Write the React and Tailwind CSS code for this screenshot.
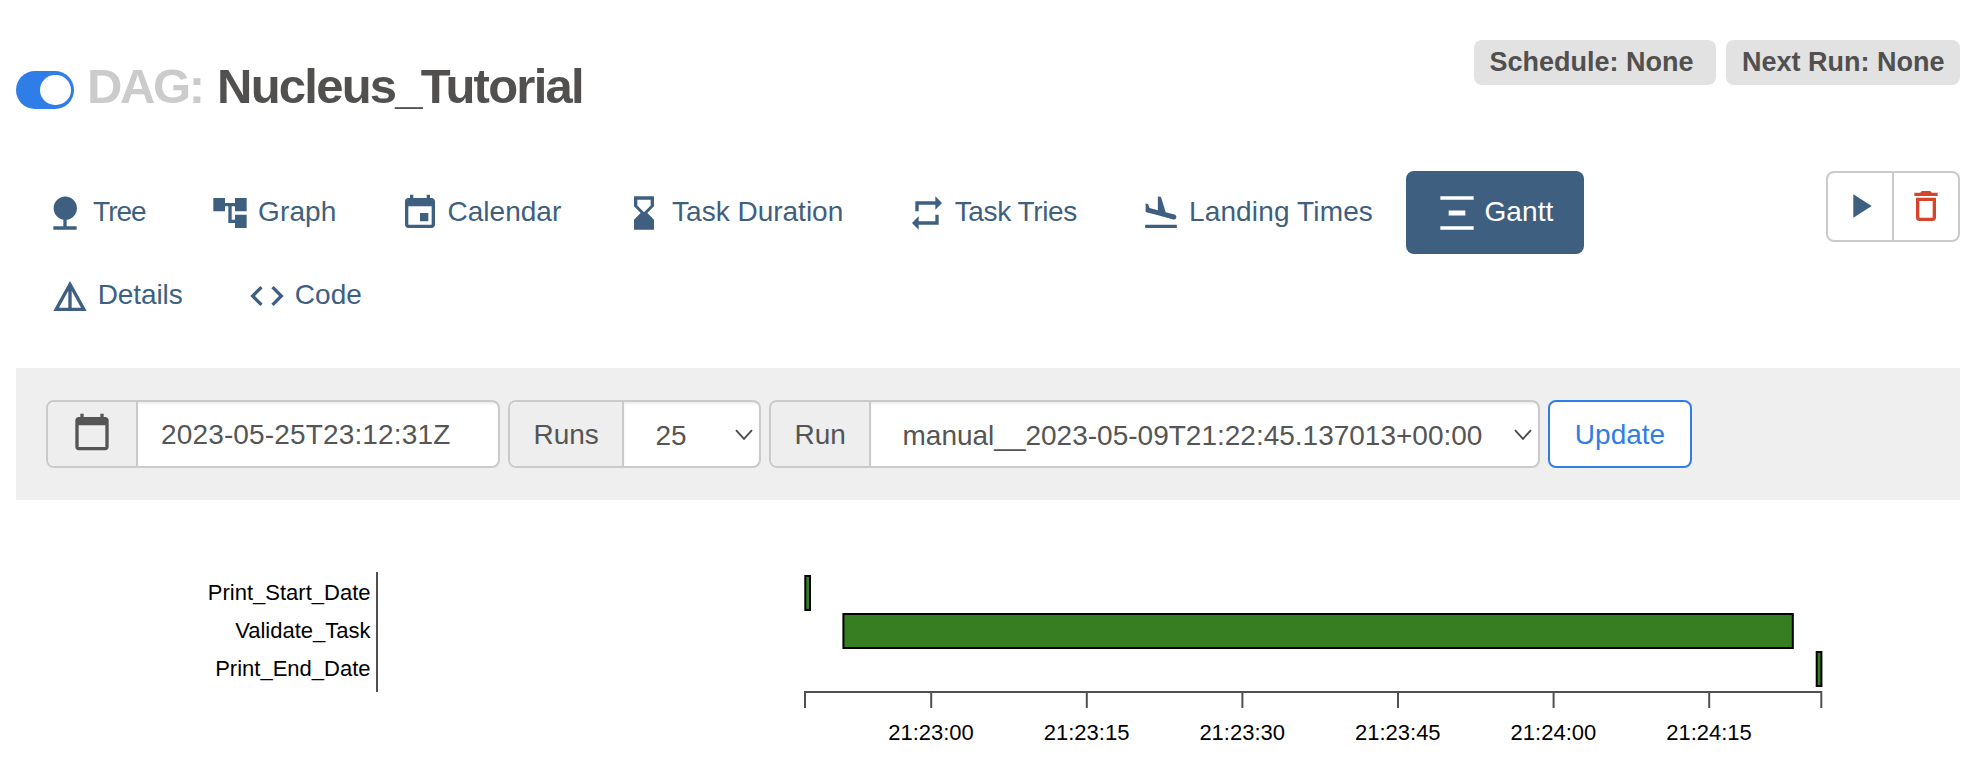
const ICONS = {
  tree: "M13 16.12c3.47-.41 6.17-3.36 6.17-6.95 0-3.87-3.13-7-7-7s-7 3.13-7 7c0 3.47 2.52 6.34 5.83 6.89V20H5v2h14v-2h-6v-3.88z",
  graph: "M22 11V3h-7v3H9V3H2v8h7V8h2v10h4v3h7v-8h-7v3h-2V8h2v3z",
  event: "M17 12h-5v5h5v-5zM16 1v2H8V1H6v2H5c-1.11 0-1.99.9-1.99 2L3 19c0 1.1.89 2 2 2h14c1.1 0 2-.9 2-2V5c0-1.1-.9-2-2-2h-1V1h-2zm3 18H5V8h14v11z",
  hourglass: "M18 22l-.01-6L14 12l3.99-4.01L18 2H6v6l4 4-4 3.99V22h12zM8 7.5V4h8v3.5l-4 4-4-4z",
  repeat: "M7 7h10v3l4-4-4-4v3H5v6h2V7zm10 10H7v-3l-4 4 4 4v-3h12v-6h-2v4z",
  landing: "M2.5 19h19v2h-19zM9.68 13.27l4.35 1.16 5.31 1.42c.8.21 1.62-.26 1.84-1.06.21-.8-.26-1.62-1.06-1.84l-5.31-1.42-2.76-9.02L10.12 2v8.28L5.15 8.95l-.93-2.32-1.45-.39v5.17l1.6.43 5.31 1.43z",
  gantt: "M22 2v2H2V2h20zM7 10.5v3h10v-3H7zM2 20v2h20v-2H2z",
  details: "M12 3L2 21h20L12 3zm1 5.92L18.6 19H13V8.92zm-2 0V19H5.4L11 8.92z",
  code: "M9.4 16.6L4.8 12l4.6-4.6L8 6l-6 6 6 6 1.4-1.4zm5.2 0l4.6-4.6-4.6-4.6L16 6l6 6-6 6-1.4-1.4z",
  calendar: "M20 3h-1V1h-2v2H7V1H5v2H4c-1.1 0-2 .9-2 2v16c0 1.1.9 2 2 2h16c1.1 0 2-.9 2-2V5c0-1.1-.9-2-2-2zm0 18H4V8h16v13z",
  play: "M8 5v14l11-7z",
  trash: "M6 19c0 1.1.9 2 2 2h8c1.1 0 2-.9 2-2V7H6v12zM8 9h8v10H8V9zm7.5-5l-1-1h-5l-1 1H5v2h14V4h-3.5z",
};

function Icon({ name, className = "" }) {
  return (
    <svg viewBox="0 0 24 24" fill="currentColor" className={`size-10 shrink-0 ${className}`}>
      <path d={ICONS[name]} />
    </svg>
  );
}

const TABS = [
  { icon: "tree", label: "Tree", width: "w-[161px]", text: "tracking-[-1px]" },
  { icon: "graph", label: "Graph", width: "w-[185.5px]", text: "tracking-[0.1px]" },
  { icon: "event", label: "Calendar", width: "w-[220.5px]", text: "tracking-[0px]" },
  { icon: "hourglass", label: "Task Duration", width: "w-[278.7px]", text: "tracking-[0px]" },
  { icon: "repeat", label: "Task Tries", width: "w-[230.2px]", text: "tracking-[-0.4px]" },
  { icon: "landing", label: "Landing Times", width: "w-[291.5px]", text: "tracking-[0.15px]" },
  { icon: "gantt", label: "Gantt", width: "w-[178px]", text: "tracking-[0.1px]", active: true },
];

const TABS_MORE = [
  { icon: "details", label: "Details", width: "w-[193px]", text: "tracking-[-0.1px]" },
  { icon: "code", label: "Code", width: "w-[180px]", text: "tracking-[0.1px]" },
];

function Tab({ icon, label, width, text, active }) {
  return (
    <a
      className={`flex h-[83px] shrink-0 items-center gap-[7.8px] rounded-lg pl-[30.4px] ${width} ${
        active ? "bg-[#3f5f80] text-white" : "text-[#3e5f80]"
      }`}
    >
      <Icon name={icon} />
      <span className={`-mt-0.5 whitespace-nowrap ${text}`}>{label}</span>
    </a>
  );
}

function Chevron() {
  return (
    <svg viewBox="0 0 18 12" className="h-3 w-[18px] shrink-0" fill="none" stroke="#4b4b4b" strokeWidth="1.9">
      <path d="M1 1.2L9 9.8L17 1.2" />
    </svg>
  );
}

function Group({ className, children }) {
  return (
    <div className={`flex h-[68px] shrink-0 overflow-hidden rounded-lg border-2 border-[#cacaca] bg-white ${className}`}>
      {children}
    </div>
  );
}

const ROWS = [
  { label: "Print_Start_Date", x: 804.3, end: 811 },
  { label: "Validate_Task", x: 842.4, end: 1793.8 },
  { label: "Print_End_Date", x: 1815.7, end: 1822.4 },
];

const TICKS = ["21:23:00", "21:23:15", "21:23:30", "21:23:45", "21:24:00", "21:24:15"];

function GanttChart() {
  return (
    <svg width="1978" height="204" viewBox="0 570 1978 204" className="mt-[70px] block font-['Liberation_Sans',Arial,sans-serif] text-[22px]">
      <path d="M377 572V692" stroke="#505050" strokeWidth="2" />
      {ROWS.map((r, i) => (
        <g key={r.label}>
          <text x="370.5" y={600 + i * 38} textAnchor="end">{r.label}</text>
          <rect x={r.x + 1} y={576 + i * 38} width={r.end - r.x - 2} height="34" fill="#377e22" stroke="#000" strokeWidth="2" />
        </g>
      ))}
      <path d="M805 708V692H1821.3V708" fill="none" stroke="#505050" strokeWidth="2" />
      {TICKS.map((t, i) => (
        <g key={t}>
          <path d={`M${931.2 + i * 155.6} 692V708`} stroke="#505050" strokeWidth="2" />
          <text x={931 + i * 155.6} y="740" textAnchor="middle">{t}</text>
        </g>
      ))}
    </svg>
  );
}

export default function App() {
  return (
    <div className="h-[774px] w-[1978px] overflow-hidden bg-white font-['Liberation_Sans',Arial,sans-serif] text-[28px] leading-8 text-[#51504f]">
      <header className="flex h-[171px] items-start justify-between pr-[18px] pl-4">
        <div className="flex items-start pt-[58px]">
          <div className="mt-[13px] flex h-[38px] w-[58px] items-center justify-end rounded-full bg-[#2f7de7] pr-[3.5px]">
            <div className="size-[30.5px] rounded-full bg-white" />
          </div>
          <h3 className="ml-[13px] flex pt-px text-[49px] leading-[54px] font-bold whitespace-nowrap">
            <span className="w-[130px] tracking-[-2.4px] text-[#cbcbcb]">DAG:</span>
            <span className="tracking-[-1.75px]">Nucleus_Tutorial</span>
          </h3>
        </div>
        <div className="flex gap-[10.5px] pt-10 text-[27px] leading-[45px] font-bold whitespace-nowrap">
          <span className="h-[45px] w-[241.5px] rounded-lg bg-[#e2e2e2] pl-[15.5px]">Schedule: None</span>
          <span className="h-[45px] w-[234px] rounded-lg bg-[#e2e2e2] pl-[16px]">Next Run: None</span>
        </div>
      </header>

      <nav className="flex h-[197px] items-start justify-between pr-[18px] pl-[14.9px]">
        <div>
          <div className="flex gap-1">
            {TABS.map((t) => <Tab key={t.label} {...t} />)}
          </div>
          <div className="flex gap-1 pl-[4.6px]">
            {TABS_MORE.map((t) => <Tab key={t.label} {...t} />)}
          </div>
        </div>
        <div className="flex h-[71px] w-[134px] rounded-lg border-2 border-[#cacaca]">
          <button className="flex w-[66px] justify-center border-r-2 border-[#cacaca] pt-[13px] text-[#3e5f80]">
            <Icon name="play" />
          </button>
          <button className="flex flex-1 justify-center pt-[13px] text-[#d7442c]">
            <Icon name="trash" />
          </button>
        </div>
      </nav>

      <form className="mr-[18px] ml-4 flex h-[132px] items-start bg-[#efefef] pt-8 pl-[30px] whitespace-nowrap text-[#555]">
        <Group className="w-[454px]">
          <span className="flex w-[90px] justify-center border-r-2 border-[#cacaca] bg-[#eee] pt-[10px]">
            <Icon name="calendar" />
          </span>
          <span className="flex-1 pt-[17px] pl-[23px] tracking-[0.15px] shadow-[inset_0_2px_2px_rgba(0,0,0,0.075)]">2023-05-25T23:12:31Z</span>
        </Group>
        <Group className="ml-2 w-[253px]">
          <span className="w-[114px] border-r-2 border-[#cacaca] bg-[#eee] pt-[17px] pl-[23.5px]">Runs</span>
          <span className="flex flex-1 items-start justify-between pt-[18px] pr-[6.5px] pl-[31.5px] shadow-[inset_0_2px_2px_rgba(0,0,0,0.075)]">
            25
            <span className="flex pt-[9px]"><Chevron /></span>
          </span>
        </Group>
        <Group className="ml-2 w-[771px]">
          <span className="w-[100px] border-r-2 border-[#cacaca] bg-[#eee] pt-[17px] pl-[23.5px]">Run</span>
          <span className="flex flex-1 items-start justify-between pt-[18px] pr-[6.5px] pl-[31.5px] shadow-[inset_0_2px_2px_rgba(0,0,0,0.075)]">
            <span>manual__2023-05-09T21:22:45.137013+00:00</span>
            <span className="flex pt-[9px]"><Chevron /></span>
          </span>
        </Group>
        <button className="ml-2 flex h-[68px] w-[144px] items-start justify-center rounded-lg border-2 border-[#2f7de7] bg-white pt-[17px] text-[#2f7de7]">
          Update
        </button>
      </form>

      <GanttChart />
    </div>
  );
}
